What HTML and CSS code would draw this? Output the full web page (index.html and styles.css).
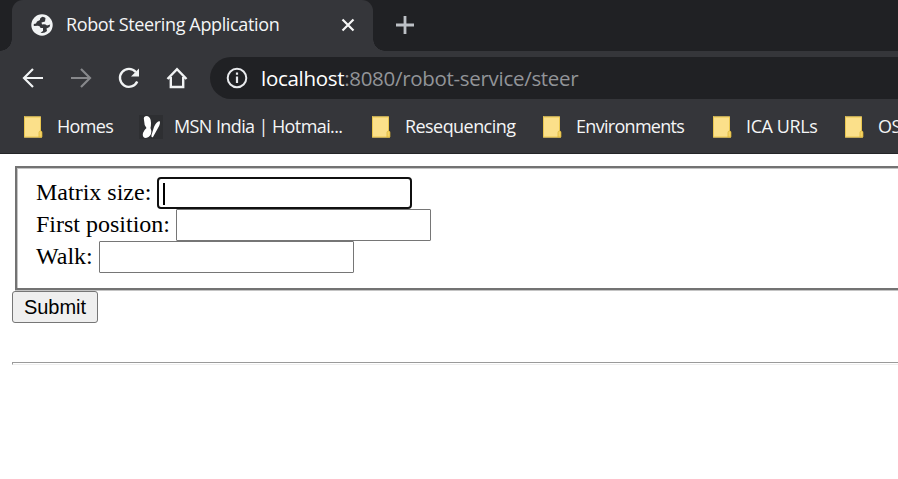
FILE: index.html
```html
<!DOCTYPE html>
<html lang="en">
<head>
<meta charset="utf-8">
<title>Robot Steering Application</title>
<link rel="stylesheet" href="styles.css">
</head>
<body>
<svg class="defs" width="0" height="0">
  <symbol id="folder" viewBox="0 0 20 22">
    <path d="M1 .5h17v15l1 .5v5.500H1z" fill="#fbe08a"/>
    <path d="M1.500 .5v20.500H18.500V15.500M1 1h16.500v14" fill="none" stroke="#e9c64f"/>
    <path d="M16 21v-4.500q0-1.500 1.500-1.500T19 16.500V21z" fill="#f5d365" stroke="#d9b234" stroke-width=".7"/>
  </symbol>
</svg>
<header class="browser">
  <div class="tabs">
    <div class="tab">
      <svg class="globe" width="22" height="22" viewBox="0 0 22 22">
        <circle cx="11" cy="11" r="10.700" fill="#f1f3f4"/>
        <path d="M11.500 2.800Q8.500 4 9 6L6 7.500L5 9.500L2.800 10V12L7 11.800Q9.500 12 9.500 14H12V17L9.500 18.800Q13.500 19.500 16 17L15.500 14.500L18.500 13L19.200 10.500L16 11.500Q14 9.500 11 10.500L10.500 8.500L14 7.500L14.500 4Q13.500 3 11.500 2.800Z" fill="#35363a"/>
      </svg>
      <span class="title">Robot Steering Application</span>
      <svg class="close" width="14" height="14" viewBox="0 0 14 14"><path d="M1.500 1.500l11 11M12.500 1.500l-11 11" stroke="#f7f7f7" stroke-width="2.200"/></svg>
    </div>
    <svg class="plus" width="20" height="20" viewBox="0 0 20 20"><path d="M10 1v18M1 10h18" stroke="#bdc1c6" stroke-width="2.800"/></svg>
  </div>
  <div class="toolbar">
    <svg class="nav" width="22" height="22" viewBox="0 0 22 22"><path d="M21 11H2M11 2l-9 9 9 9" fill="none" stroke="#f1f3f4" stroke-width="2.200"/></svg>
    <svg class="nav" width="22" height="22" viewBox="0 0 22 22"><path d="M1 11h19M11 2l9 9-9 9" fill="none" stroke="#87888b" stroke-width="2.200"/></svg>
    <svg class="nav" width="22" height="22" viewBox="0 0 22 22"><path d="M17.800 5A9 9 0 1 0 19.200 14.500" fill="none" stroke="#f1f3f4" stroke-width="2.400"/><path d="M21 1.500v8h-8z" fill="#f1f3f4"/></svg>
    <svg class="nav" width="22" height="22" viewBox="0 0 22 22"><path d="M1.500 12L11 2.200 20.500 12M4.800 10v10h12.400V10" fill="none" stroke="#f1f3f4" stroke-width="2.400"/></svg>
    <div class="address">
      <svg width="22" height="22" viewBox="0 0 22 22"><circle cx="11" cy="11" r="9.300" fill="none" stroke="#e8eaed" stroke-width="2"/><path d="M11 5.500v2.200M11 9.500v6.500" stroke="#e8eaed" stroke-width="2.200"/></svg>
      <span class="url"><span class="host">localhost</span><span class="path">:8080/robot-service/steer</span></span>
    </div>
  </div>
  <nav class="bookmarks">
    <a class="bm homes"><svg width="20" height="22"><use href="#folder"/></svg><span>Homes</span></a>
    <a class="bm msn"><svg width="24" height="24" viewBox="0 0 24 24"><path d="M0 0h24v24H0z" fill="#2e2f32"/><path d="M5 5Q4 1 8 1Q12 2 12 8Q12 11 11.500 13Q13 16 12 19Q10 23 6 23Q3 22 4 18Q5 15 7.500 13Q5 10 5 5Z" fill="#fff"/><path d="M20.500 6Q22 8 19 13L14 22Q12 23 12.500 20L15 12Q17 7 20.500 6Z" fill="#fff"/></svg><span>MSN India | Hotmai...</span></a>
    <a class="bm reseq"><svg width="20" height="22"><use href="#folder"/></svg><span>Resequencing</span></a>
    <a class="bm env"><svg width="20" height="22"><use href="#folder"/></svg><span>Environments</span></a>
    <a class="bm ica"><svg width="20" height="22"><use href="#folder"/></svg><span>ICA URLs</span></a>
    <a class="bm os"><svg width="20" height="22"><use href="#folder"/></svg><span>OS</span></a>
  </nav>
</header>
<main>
  <form>
    <div class="fields">
      <label class="row"><span class="label">Matrix size:</span><span class="input focused"><i class="caret"></i></span></label>
      <label class="row"><span class="label">First position:</span><span class="input"></span></label>
      <label class="row"><span class="label">Walk:</span><span class="input"></span></label>
    </div>
    <button class="submit" type="button">Submit</button>
  </form>
  <div class="rule"></div>
</main>
</body>
</html>
```
FILE: styles.css
```css
* { box-sizing: border-box; }
body { margin: 0; height: 479px; overflow: hidden; background: #fff; font-family: "Liberation Serif", serif; }
svg { display: block; flex: none; }
.defs { position: absolute; }
.browser { height: 154px; overflow: hidden; background: #35363a; border-bottom: 1px solid #242528; color: #f4f5f6; font-family: "Open Sans", sans-serif; white-space: nowrap; }
.tabs { height: 51px; display: flex; background: #202124; padding-left: 12px; }
.tab { position: relative; width: 361px; height: 51px; display: flex; align-items: center; padding: 0 18px 0 19px; background: #35363a; border-radius: 11px 11px 0 0; }
.tab::before, .tab::after { content: ""; position: absolute; bottom: 0; width: 12px; height: 12px; }
.tab::before { left: -12px; background: radial-gradient(circle at 0 0, #202124 11.500px, #35363a 12px); }
.tab::after { right: -12px; background: radial-gradient(circle at 100% 0, #202124 11.500px, #35363a 12px); }
.globe, .close { margin-bottom: 1px; }
.title { margin-left: 13px; padding-bottom: 3px; font-size: 18px; letter-spacing: -.36px; }
.close { margin-left: auto; }
.plus { margin: 15px 0 0 22px; }
.toolbar { height: 49px; display: flex; align-items: center; padding: 6px 0 1px 22px; }
.nav { margin-right: 26px; }
.address { flex: 1; height: 42px; display: flex; align-items: center; margin-left: -4px; padding-left: 16px; background: #202124; border-radius: 21px 0 0 21px; }
.url { margin-left: 13px; font-size: 20.500px; letter-spacing: -.3px; }
.host { color: #fff; }
.path { color: #929498; }
.bookmarks { height: 53px; display: flex; align-items: center; font-size: 18px; letter-spacing: -.56px; }
.bm { display: flex; align-items: center; flex: none; }
.bm span { margin-left: 14px; padding-bottom: 2px; }
.homes { width: 116px; margin-left: 23px; letter-spacing: -.65px; }
.msn { width: 232px; letter-spacing: -.6px; }
.msn span { margin-left: 11px; }
.reseq { width: 171px; }
.env { width: 170px; letter-spacing: -.7px; }
.ica { width: 132px; letter-spacing: -.4px; }
main { padding: 12px 0 0 12px; }
.fields { height: 124px; margin: 0 -10px 0 3px; padding: 9px 0 0 19px; border: 2px solid #737373; box-shadow: inset 1px 1px #c4c4c4, 0 1px #c4c4c4; }
.row { height: 32px; display: flex; align-items: center; font-size: 24px; color: #000; }
.label { padding-bottom: 2px; }
.input { width: 255px; height: 32px; margin-left: 6px; padding: 4px; border: 1px solid #767676; border-radius: 1px; background: #fff; }
.focused { border: 2px solid #101010; border-radius: 4px; }
.caret { display: block; width: 2px; height: 22px; background: #000; }
.submit { position: relative; display: block; width: 86px; height: 32px; margin-top: 1px; padding: 0; border: 1px solid #767676; border-radius: 3px; background: #efefef; color: #000; font: 20px "Liberation Sans", sans-serif; }
.rule { height: 3px; margin-top: 39px; border: solid #9a9a9a; border-width: 1px 0 1px 1px; border-bottom-color: #eee; }
```
